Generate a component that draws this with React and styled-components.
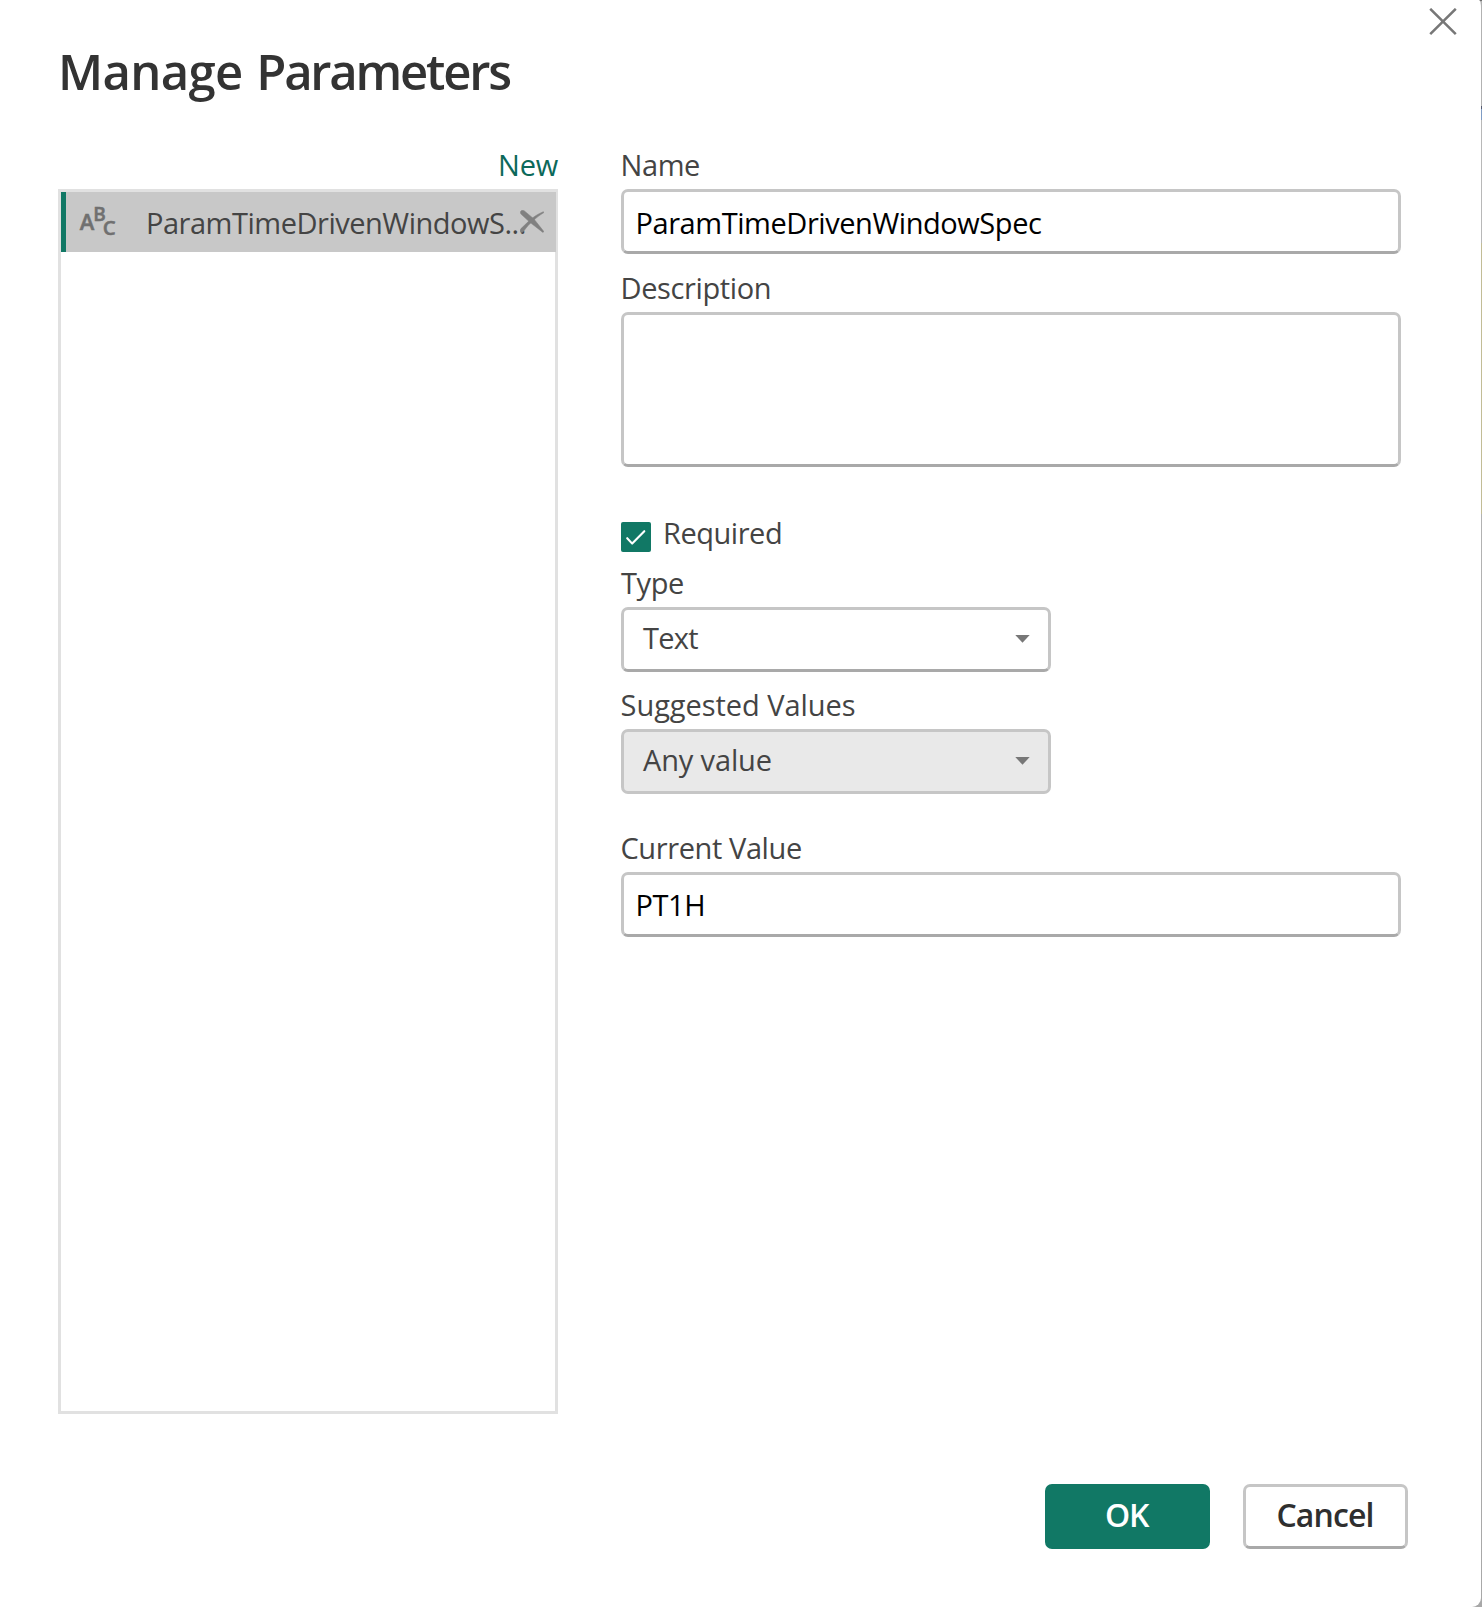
import React from "react";
import styled, { createGlobalStyle } from "styled-components";

const GlobalStyle = createGlobalStyle`
  *, *::before, *::after { box-sizing: border-box; }
  html, body { margin: 0; padding: 0; }
  body {
    background: linear-gradient(
      to bottom,
      #6f6f6f 0 1px, #b2b2b2 1px 106px, #555b70 106px 109px, #7f9cc4 109px 120px,
      #b8b8b8 120px 243px, #c2bc96 243px 514px, #b2b2b2 514px, #a8a8a8 1607px
    );
    font-family: "Open Sans", "Noto Sans", sans-serif;
    font-size: 29px;
    line-height: 40px;
    color: #444;
    overflow: hidden;
  }
`;

const Dialog = styled.main`
  width: 1481px;
  height: 1607px;
  padding: 37px 73px 0 58px;
  position: relative;
  display: flex;
  flex-direction: column;
  background: #fff;
  border-radius: 0 2px 9px 0 / 0 8px 9px 0;
`;

const CloseButton = styled.button`
  position: absolute;
  top: 8px;
  right: 24px;
  width: 28px;
  height: 28px;
  padding: 0;
  border: 0;
  background: none;
  svg { display: block; }
`;

const Title = styled.h1`
  margin: 0 0 40px 0;
  font-size: 49px;
  line-height: 68px;
  font-weight: 600;
  color: #333;
`;

const TitleWord = styled.span`
  letter-spacing: ${(p) => p.$tracking}px;
  word-spacing: 1.5px;
`;

const Body = styled.div`
  display: grid;
  grid-template-columns: 500px 780px;
  column-gap: 63px;
  height: 1269px;
`;

const Sidebar = styled.section`
  display: flex;
  flex-direction: column;
  gap: 4px;
`;

const NewLink = styled.a`
  align-self: flex-end;
  letter-spacing: -0.2px;
  color: #0c695a;
`;

const ParameterList = styled.div`
  flex: 1;
  border: 3px solid #e1e1e1;
`;

const ParameterRow = styled.div`
  display: flex;
  align-items: center;
  height: 60px;
  width: 495px;
  padding: 0 12px 0 14px;
  border-left: 5px solid #117865;
  background: #c8c8c8;
`;

const TypeIcon = styled.svg`
  flex: none;
  width: 36px;
  height: 32px;
  margin: 0 30px 0 0;
  overflow: visible;
  font-weight: 600;
  fill: #707070;
  stroke: #707070;
  stroke-width: 0.5px;
`;

const RowName = styled.span`
  flex: none;
  width: 374px;
  padding-top: 2px;
  letter-spacing: -0.48px;
  white-space: nowrap;
`;

const DeleteIcon = styled.svg`
  flex: none;
  width: 24px;
  height: 23px;
  margin-bottom: 1px;
`;

const Form = styled.form`
  display: flex;
  flex-direction: column;
`;

const Field = styled.div`
  display: flex;
  flex-direction: column;
  gap: 4px;
  margin-bottom: ${(p) => p.$after}px;
`;

const Label = styled.label`
  margin-left: ${(p) => p.$shift || 0}px;
  letter-spacing: ${(p) => p.$tracking || 0}px;
`;

const Box = styled.div`
  display: flex;
  align-items: center;
  width: ${(p) => p.$width || 780}px;
  height: ${(p) => p.$height || 65}px;
  border: 3px solid #c6c6c6;
  border-bottom-color: ${(p) => (p.$disabled ? "#c6c6c6" : "#a9a9a9")};
  border-radius: 7px;
  background: ${(p) => (p.$disabled ? "#e9e9e9" : "#fff")};
`;

const TextBox = styled(Box)`
  padding: ${(p) => p.$drop || 0}px 11.5px 0;
  letter-spacing: -0.44px;
  color: #000;
`;

const SelectBox = styled(Box)`
  justify-content: space-between;
  padding: 0 18px 0 19px;
  letter-spacing: ${(p) => p.$tracking}px;
  span { padding-bottom: 3px; }
`;

const CheckRow = styled.div`
  display: flex;
  height: 40px;
  margin-bottom: 10px;
  letter-spacing: -0.46px;
`;

const CheckBox = styled.span`
  width: 30px;
  height: 30px;
  margin: 9px 12px 0 0;
  border-radius: 2px;
  background: #117865;
  svg { display: block; }
`;

const Footer = styled.footer`
  display: flex;
  justify-content: flex-end;
  gap: 33px;
  margin-top: 70px;
`;

const Button = styled.button`
  width: 165px;
  height: 65px;
  padding: 0 ${(p) => (p.$primary ? 2 : 1)}px 3px 0;
  border: 3px solid ${(p) => (p.$primary ? "#117865" : "#c6c6c6")};
  border-bottom-color: ${(p) => (p.$primary ? "#117865" : "#a9a9a9")};
  border-radius: 7px;
  background: ${(p) => (p.$primary ? "#117865" : "#fff")};
  color: ${(p) => (p.$primary ? "#fff" : "#2f2f2f")};
  font-family: inherit;
  font-size: 32px;
  line-height: 44px;
  font-weight: 600;
  letter-spacing: ${(p) => (p.$primary ? -1.2 : -0.9)}px;
`;

const Caret = () => (
  <svg width="15" height="9" viewBox="0 0 15 9">
    <path d="M0.3 0H14.7L7.5 7.8Z" fill="#777" />
  </svg>
);

export default function App() {
  return (
    <>
      <GlobalStyle />
      <Dialog>
        <CloseButton aria-label="Close">
          <svg width="28" height="28" viewBox="0 0 28 28" fill="none" stroke="#777" strokeWidth="2.5">
            <path d="M1.2 0.8L26.8 26.2M26.8 0.8L1.2 26.2" />
          </svg>
        </CloseButton>
        <Title>
          <TitleWord $tracking={-0.65}>Manage </TitleWord>
          <TitleWord $tracking={-2.2}>Parameters</TitleWord>
        </Title>
        <Body>
          <Sidebar>
            <NewLink>New</NewLink>
            <ParameterList>
              <ParameterRow>
                <TypeIcon viewBox="0 0 36 32">
                  <text x="-0.3" y="24" fontSize="22">A</text>
                  <text x="13.3" y="14.5" fontSize="19">B</text>
                  <text x="22.8" y="28.8" fontSize="20.5">C</text>
                </TypeIcon>
                <RowName>ParamTimeDrivenWindowS...</RowName>
                <DeleteIcon viewBox="0 0 24 23" fill="#808080" stroke="#808080" strokeWidth="0.5">
                  <path d="M0.8 1.2C1.6 -0.1 3.2 0 4.4 0.9L13.9 8.9L23.9 21.6L22.9 22.4L10.2 12.6L1.2 4.3C0.3 3.2 0.2 2.1 0.8 1.2Z" />
                  <path d="M23.9 2.6L23.4 1.7C17.5 4 12.5 7.5 8.6 11.3L1 18.6C-0.2 20 -0.2 21.4 0.8 22.1C1.7 22.8 2.8 22.2 3.8 21.1C6.6 17.1 9.5 14 12.8 11.1C16.1 8 19.5 5.3 23.9 2.6Z" />
                </DeleteIcon>
              </ParameterRow>
            </ParameterList>
          </Sidebar>
          <Form>
            <Field $after={14}>
              <Label $shift={-0.5} $tracking={-0.4}>Name</Label>
              <TextBox $drop={2}>ParamTimeDrivenWindowSpec</TextBox>
            </Field>
            <Field $after={46}>
              <Label $shift={-0.5} $tracking={-0.38}>Description</Label>
              <TextBox $height={155} />
            </Field>
            <CheckRow>
              <CheckBox>
                <svg width="30" height="30" viewBox="0 0 30 30" fill="none" stroke="#fff" strokeWidth="2.1" strokeLinecap="round" strokeLinejoin="round">
                  <path d="M6.2 16.2L11.2 21.6L23.3 9.2" />
                </svg>
              </CheckBox>
              <span>Required</span>
            </CheckRow>
            <Field $after={13}>
              <Label $tracking={-0.4}>Type</Label>
              <SelectBox $width={430} $tracking={-0.7}>
                <span>Text</span>
                <Caret />
              </SelectBox>
            </Field>
            <Field $after={34}>
              <Label $shift={-0.4} $tracking={-0.06}>Suggested Values</Label>
              <SelectBox $width={430} $tracking={-0.15} $disabled>
                <span>Any value</span>
                <Caret />
              </SelectBox>
            </Field>
            <Field $after={0}>
              <Label $shift={-0.5} $tracking={-0.4}>Current Value</Label>
              <TextBox>PT1H</TextBox>
            </Field>
          </Form>
        </Body>
        <Footer>
          <Button $primary>OK</Button>
          <Button>Cancel</Button>
        </Footer>
      </Dialog>
    </>
  );
}
